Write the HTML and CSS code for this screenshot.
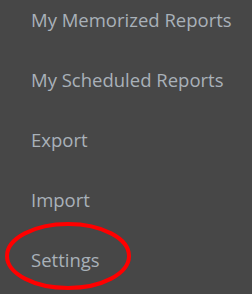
FILE: index.html
```
<!DOCTYPE html>
<html>
<head>
<meta charset="utf-8">
<link rel="stylesheet" href="styles.css">
</head>
<body>
<ul class="menu">
  <li class="item">My Memorized Reports</li>
  <li class="item">My Scheduled Reports</li>
  <li class="item">Export</li>
  <li class="item">Import</li>
  <li class="item highlighted">Settings
    <svg class="circle" width="126" height="68" viewBox="0 0 126 68"><ellipse cx="63" cy="34" rx="61" ry="32" fill="none" stroke="#ff0000" stroke-width="4"/></svg>
  </li>
</ul>
</body>
</html>
```
FILE: styles.css
```
html, body {
  margin: 0;
  padding: 0;
  background: #474747;
  width: 252px;
  height: 294px;
  overflow: hidden;
}
.menu {
  list-style: none;
  margin: 0;
  padding: 7px 0 0 31px;
  display: flex;
  flex-direction: column;
  gap: 34px;
  font-family: "Open Sans", sans-serif;
  font-size: 18.5px;
  line-height: 26px;
  color: #a9b1b9;
}
.item {
  white-space: nowrap;
}
.highlighted {
  position: relative;
}
.circle {
  position: absolute;
  left: -26px;
  top: -25px;
}
```
